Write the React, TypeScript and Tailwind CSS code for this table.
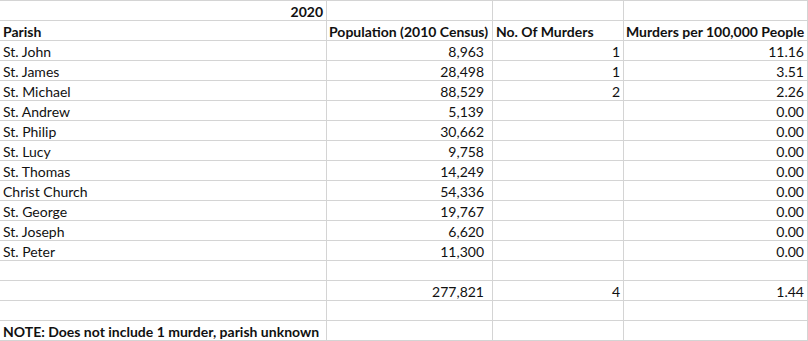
import React from "react";

type Row = { a?: string; b?: string; c?: string; d?: string; boldA?: boolean; header?: boolean; aRight?: boolean };

const rows: Row[] = [
  { a: "2020", boldA: true, aRight: true },
  { a: "Parish", b: "Population (2010 Census)", c: "No. Of Murders", d: "Murders per 100,000 People", header: true },
  { a: "St. John", b: "8,963", c: "1", d: "11.16" },
  { a: "St. James", b: "28,498", c: "1", d: "3.51" },
  { a: "St. Michael", b: "88,529", c: "2", d: "2.26" },
  { a: "St. Andrew", b: "5,139", d: "0.00" },
  { a: "St. Philip", b: "30,662", d: "0.00" },
  { a: "St. Lucy", b: "9,758", d: "0.00" },
  { a: "St. Thomas", b: "14,249", d: "0.00" },
  { a: "Christ Church", b: "54,336", d: "0.00" },
  { a: "St. George", b: "19,767", d: "0.00" },
  { a: "St. Joseph", b: "6,620", d: "0.00" },
  { a: "St. Peter", b: "11,300", d: "0.00" },
  {},
  { b: "277,821", c: "4", d: "1.44" },
  {},
  { a: "NOTE: Does not include 1 murder, parish unknown", boldA: true },
];

export default function App() {
  return (
    <div
      className="w-[808px] h-[341px] bg-white text-[#111] overflow-hidden"
      style={{ fontFamily: "Lato, 'Liberation Sans', sans-serif" }}
    >
      <div className="grid grid-cols-[327px_166px_131px_184px] text-[14px] leading-[19px]">
        {rows.map((r, i) => {
          const last = i === rows.length - 1;
          const base = `h-[20px] border-t border-r border-[#d4d4d4] whitespace-nowrap overflow-visible ${last ? "h-[21px] border-b" : ""}`;
          return (
            <React.Fragment key={i}>
              <div className={`${base} px-[3px] pt-[1px] ${r.aRight ? "text-right" : "text-left"} ${r.boldA || r.header ? "font-bold" : ""}`}>{r.a}</div>
              <div className={`${base} pt-[1px] ${r.header ? "text-left px-[2px] font-bold" : "text-right pr-[8px]"}`}>{r.b}</div>
              <div className={`${base} pt-[1px] ${r.header ? "text-left px-[3px] font-bold" : "text-right pr-[3px]"}`}>{r.c}</div>
              <div className={`${base} pt-[1px] ${r.header ? "text-left px-[2px] font-bold" : "text-right pr-[3px]"}`}>{r.d}</div>
            </React.Fragment>
          );
        })}
      </div>
    </div>
  );
}
